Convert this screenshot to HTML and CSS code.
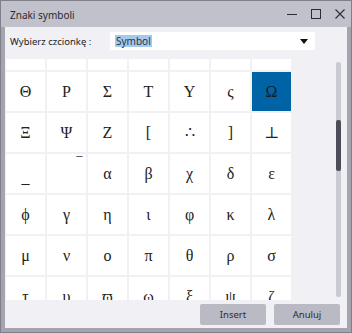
FILE: index.html
```html
<html>
    <head>
    <title>Znaki symboli</title>
    <link rel="stylesheet" href="styles.css">
    </head>

    <body>
        <div class="window">
            <!-- pasek tytułu -->
            <div class="titlebar">
                <span class="title">Znaki symboli</span>
                <div class="controls">
                    <svg width="10" height="10" viewBox="0 0 10 10"><path d="M0 5.5H10" stroke="#2b2b33" stroke-width="1"/></svg>
                    <svg width="10" height="10" viewBox="0 0 10 10"><rect x="0.5" y="0.5" width="9" height="9" fill="none" stroke="#2b2b33" stroke-width="1"/></svg>
                    <svg width="10" height="10" viewBox="0 0 10 10"><path d="M0.5 0.5L9.5 9.5M9.5 0.5L0.5 9.5" stroke="#2b2b33" stroke-width="1.1"/></svg>
                </div>
            </div>

            <div class="body">
                <!-- wybór czcionki -->
                <div class="font-row">
                    <span class="label">Wybierz czcionkę :</span>
                    <div class="select">
                        <span class="sel">Symbol</span>
                        <svg width="8" height="5" viewBox="0 0 8 5"><path d="M0 0H8L4 5Z" fill="#111"/></svg>
                    </div>
                </div>

                <!-- tablica znaków (pierwszy wiersz przewinięty poza widok) -->
                <div class="chars-area">
                    <div class="chars-view">
                        <div class="grid">
                            <div class="cell"></div><div class="cell"></div><div class="cell"></div><div class="cell"></div><div class="cell"></div><div class="cell"></div><div class="cell"></div>
                            <div class="cell">Θ</div><div class="cell">Ρ</div><div class="cell">Σ</div><div class="cell">Τ</div><div class="cell">Υ</div><div class="cell">ς</div><div class="cell current">Ω</div>
                            <div class="cell">Ξ</div><div class="cell">Ψ</div><div class="cell">Ζ</div><div class="cell">[</div><div class="cell">∴</div><div class="cell">]</div><div class="cell">⊥</div>
                            <div class="cell low">_</div><div class="cell high"><span>‾</span></div><div class="cell">α</div><div class="cell">β</div><div class="cell">χ</div><div class="cell">δ</div><div class="cell">ε</div>
                            <div class="cell">ϕ</div><div class="cell">γ</div><div class="cell">η</div><div class="cell">ι</div><div class="cell">φ</div><div class="cell">κ</div><div class="cell">λ</div>
                            <div class="cell">μ</div><div class="cell">ν</div><div class="cell">ο</div><div class="cell">π</div><div class="cell">θ</div><div class="cell">ρ</div><div class="cell">σ</div>
                            <div class="cell">τ</div><div class="cell">υ</div><div class="cell">ϖ</div><div class="cell">ω</div><div class="cell">ξ</div><div class="cell">ψ</div><div class="cell">ζ</div>
                        </div>
                    </div>
                    <div class="scrollbar"><div class="thumb"></div></div>
                </div>

                <!-- przyciski -->
                <div class="buttons">
                    <button class="btn">Insert</button>
                    <button class="btn">Anuluj</button>
                </div>
            </div>
        </div>
    </body>
</html>
```

FILE: styles.css
```css
*{
    padding:0;
    margin:0;
    box-sizing:border-box;
}

body{
    font-family:"Noto Sans","Open Sans",sans-serif;
    font-size:9.5px;
    color:#222;
}

/*okno dialogowe*/
.window{
    width:352px;
    height:333px;
    background-color:#a3a4ae;
    border:1px solid #7e7f89;
    display:flex;
    flex-direction:column;
}

.titlebar{
    height:26px;
    background-color:#c0c1ca;
    display:flex;
    align-items:center;
    justify-content:space-between;
    padding:0 6px 0 9px;
}

.title{
    font-size:10px;
    color:#2a2a30;
    padding-top:1px;
}

.controls{
    display:flex;
    align-items:center;
    gap:14px;
}

.controls svg{
    display:block;
}

/*zawartość okna*/
.body{
    flex:1;
    margin:0 4px 4px;
    background-color:#f0f0f5;
    display:flex;
    flex-direction:column;
    padding:5px 0 3px;
}

.font-row{
    display:flex;
    align-items:center;
    height:18px;
    padding-left:5px;
}

.label{
    width:100px;
    color:#222;
}

.select{
    width:205px;
    height:18px;
    background-color:#fff;
    display:flex;
    align-items:center;
    justify-content:space-between;
    padding:0 7px 0 5px;
    font-size:10px;
}

.sel{
    background-color:#a7c9e9;
    color:#1f3552;
    line-height:12px;
    padding:0 1px;
}

.select svg{
    display:block;
}

/*obszar znaków*/
.chars-area{
    height:241px;
    margin-top:9px;
    display:flex;
    justify-content:space-between;
}

.chars-view{
    width:286px;
    margin-left:1px;
    overflow:hidden;
}

.grid{
    display:grid;
    grid-template-columns:repeat(7,39px);
    grid-auto-rows:39px;
    gap:2px;
    margin-top:-28px;
}

.cell{
    background-color:#fff;
    display:flex;
    align-items:center;
    justify-content:center;
    font:16px "Liberation Serif","DejaVu Serif",serif;
    color:#222;
}

.cell.current{
    background-color:#0063a6;
    color:#1a1a22;
}

.cell.low{
    align-items:flex-end;
    padding-bottom:6px;
}

.cell.high{
    align-items:flex-start;
    justify-content:flex-end;
    padding:2px 4px 0 0;
}

.scrollbar{
    width:5px;
    margin:3px 6px 3px 0;
    background-color:#c9cbd3;
    border-radius:2px;
}

.thumb{
    height:51px;
    margin-top:58px;
    background-color:#4b4e58;
    border-radius:2px;
}

/*przyciski*/
.buttons{
    display:flex;
    justify-content:flex-end;
    gap:8px;
    margin-top:4px;
    padding-right:7px;
}

.btn{
    width:66px;
    height:21px;
    border:none;
    border-radius:2px;
    background-color:#b9bac4;
    color:#2c2c33;
    font-family:"Noto Sans","Open Sans",sans-serif;
    font-size:9.5px;
}
```
